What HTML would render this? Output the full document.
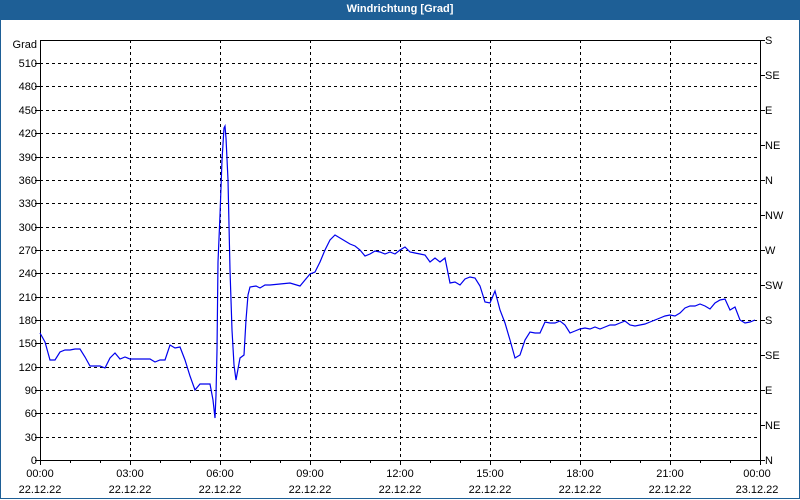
<!DOCTYPE html>
<html><head><style>
html,body{margin:0;padding:0;}
body{width:800px;height:500px;background:#fff;position:relative;overflow:hidden;font-family:Tahoma,"Liberation Sans",sans-serif;font-size:11px;}
.t{position:absolute;left:0;top:0;width:800px;height:20px;background:#1e5f96;color:#fff;font-weight:bold;text-align:center;line-height:18px;font-size:11px;}
.b{position:absolute;left:0;top:20px;width:798px;height:478px;border:1px solid #1e5f96;border-top:none;}
</style></head><body>
<div class="t">Windrichtung [Grad]</div>
<div class="b"></div>
<svg width="800" height="500" style="position:absolute;left:0;top:0" font-family="Tahoma, 'Liberation Sans', sans-serif" font-size="11">
<g stroke="#000" stroke-width="1" stroke-dasharray="3,3" shape-rendering="crispEdges">
<path d="M40 63.5H760M40 86.5H760M40 110.5H760M40 133.5H760M40 157.5H760M40 180.5H760M40 203.5H760M40 227.5H760M40 250.5H760M40 273.5H760M40 297.5H760M40 320.5H760M40 343.5H760M40 367.5H760M40 390.5H760M40 413.5H760M40 437.5H760"/>
<path d="M130.5 40V460M220.5 40V460M310.5 40V460M400.5 40V460M490.5 40V460M580.5 40V460M670.5 40V460"/>
</g>
<g stroke="#000" fill="none" shape-rendering="crispEdges">
<path d="M40.5 40V460.5H760.5V40M40 40.5H760"/>
<path d="M35 63.5h5M35 86.5h5M35 110.5h5M35 133.5h5M35 157.5h5M35 180.5h5M35 203.5h5M35 227.5h5M35 250.5h5M35 273.5h5M35 297.5h5M35 320.5h5M35 343.5h5M35 367.5h5M35 390.5h5M35 413.5h5M35 437.5h5M35 460.5h5"/>
<path d="M760 40.5h5M760 75.5h5M760 110.5h5M760 145.5h5M760 180.5h5M760 215.5h5M760 250.5h5M760 285.5h5M760 320.5h5M760 355.5h5M760 390.5h5M760 425.5h5M760 460.5h5"/>
<path d="M40.5 460v5M70.5 460v3M100.5 460v3M130.5 460v5M160.5 460v3M190.5 460v3M220.5 460v5M250.5 460v3M280.5 460v3M310.5 460v5M340.5 460v3M370.5 460v3M400.5 460v5M430.5 460v3M460.5 460v3M490.5 460v5M520.5 460v3M550.5 460v3M580.5 460v5M610.5 460v3M640.5 460v3M670.5 460v5M700.5 460v3M730.5 460v3M760.5 460v5"/>
</g>
<g text-anchor="end" fill="#000">
<text x="37" y="48">Grad</text>
<text x="37" y="67">510</text><text x="37" y="90">480</text><text x="37" y="114">450</text><text x="37" y="137">420</text><text x="37" y="161">390</text><text x="37" y="184">360</text><text x="37" y="207">330</text><text x="37" y="231">300</text><text x="37" y="254">270</text><text x="37" y="277">240</text><text x="37" y="301">210</text><text x="37" y="324">180</text><text x="37" y="347">150</text><text x="37" y="371">120</text><text x="37" y="394">90</text><text x="37" y="417">60</text><text x="37" y="441">30</text><text x="37" y="464">0</text>
</g>
<g fill="#000">
<text x="765" y="44">S</text><text x="765" y="79">SE</text><text x="765" y="114">E</text><text x="765" y="149">NE</text><text x="765" y="184">N</text><text x="765" y="219">NW</text><text x="765" y="254">W</text><text x="765" y="289">SW</text><text x="765" y="324">S</text><text x="765" y="359">SE</text><text x="765" y="394">E</text><text x="765" y="429">NE</text><text x="765" y="464">N</text>
</g>
<g text-anchor="middle" fill="#000">
<text x="40" y="477">00:00</text><text x="130" y="477">03:00</text><text x="220" y="477">06:00</text><text x="310" y="477">09:00</text><text x="400" y="477">12:00</text><text x="490" y="477">15:00</text><text x="580" y="477">18:00</text><text x="670" y="477">21:00</text><text x="757" y="477">00:00</text>
<text x="40" y="493">22.12.22</text><text x="130" y="493">22.12.22</text><text x="220" y="493">22.12.22</text><text x="310" y="493">22.12.22</text><text x="400" y="493">22.12.22</text><text x="490" y="493">22.12.22</text><text x="580" y="493">22.12.22</text><text x="670" y="493">22.12.22</text><text x="757" y="493">23.12.22</text>
</g>
<polyline fill="none" stroke="#0000ee" stroke-width="1.2" points="40,333 45,342 50,360 55,360 60,352 65,350 70,350 75,349 80,349 85,357 90,366 95,366 100,366 105,368 110,358 115,353 120,359 125,357 130,359 140,359 150,359 155,362 160,360 165,360 170,345 175,348 180,347 185,360 190,376 195,390 200,384 205,384 210,384 213,400 215,418 216,395 217,350 218,262 220,215 222,160 224,128 225,126 226,138 228,180 230,270 232,330 234,365 236,380 240,358 244,355 246,320 248,295 250,287 256,286 260,288 265,285 270,285 280,284 290,283 300,286 305,280 310,274 315,272 320,262 325,250 330,240 335,235 340,238 345,241 350,244 355,246 360,250 365,256 370,254 375,251 380,252 385,254 390,252 395,254 400,250 405,247 410,252 415,253 420,254 425,255 430,262 435,258 440,262 445,258 450,283 455,282 460,285 465,279 470,277 475,278 480,286 485,302 490,303 495,291 500,310 505,323 510,340 515,358 520,355 525,340 530,332 535,333 540,333 545,322 550,323 555,323 560,321 565,325 570,333 575,331 580,329 585,328 590,329 595,327 600,329 605,327 610,325 615,325 620,323 625,321 630,325 635,326 640,325 645,324 650,322 655,320 660,318 665,316 670,315 675,316 680,313 685,308 690,306 695,306 700,304 705,306 710,309 715,303 720,300 725,299 730,310 735,307 740,320 745,323 750,322 755,320"/>
</svg>
</body></html>
